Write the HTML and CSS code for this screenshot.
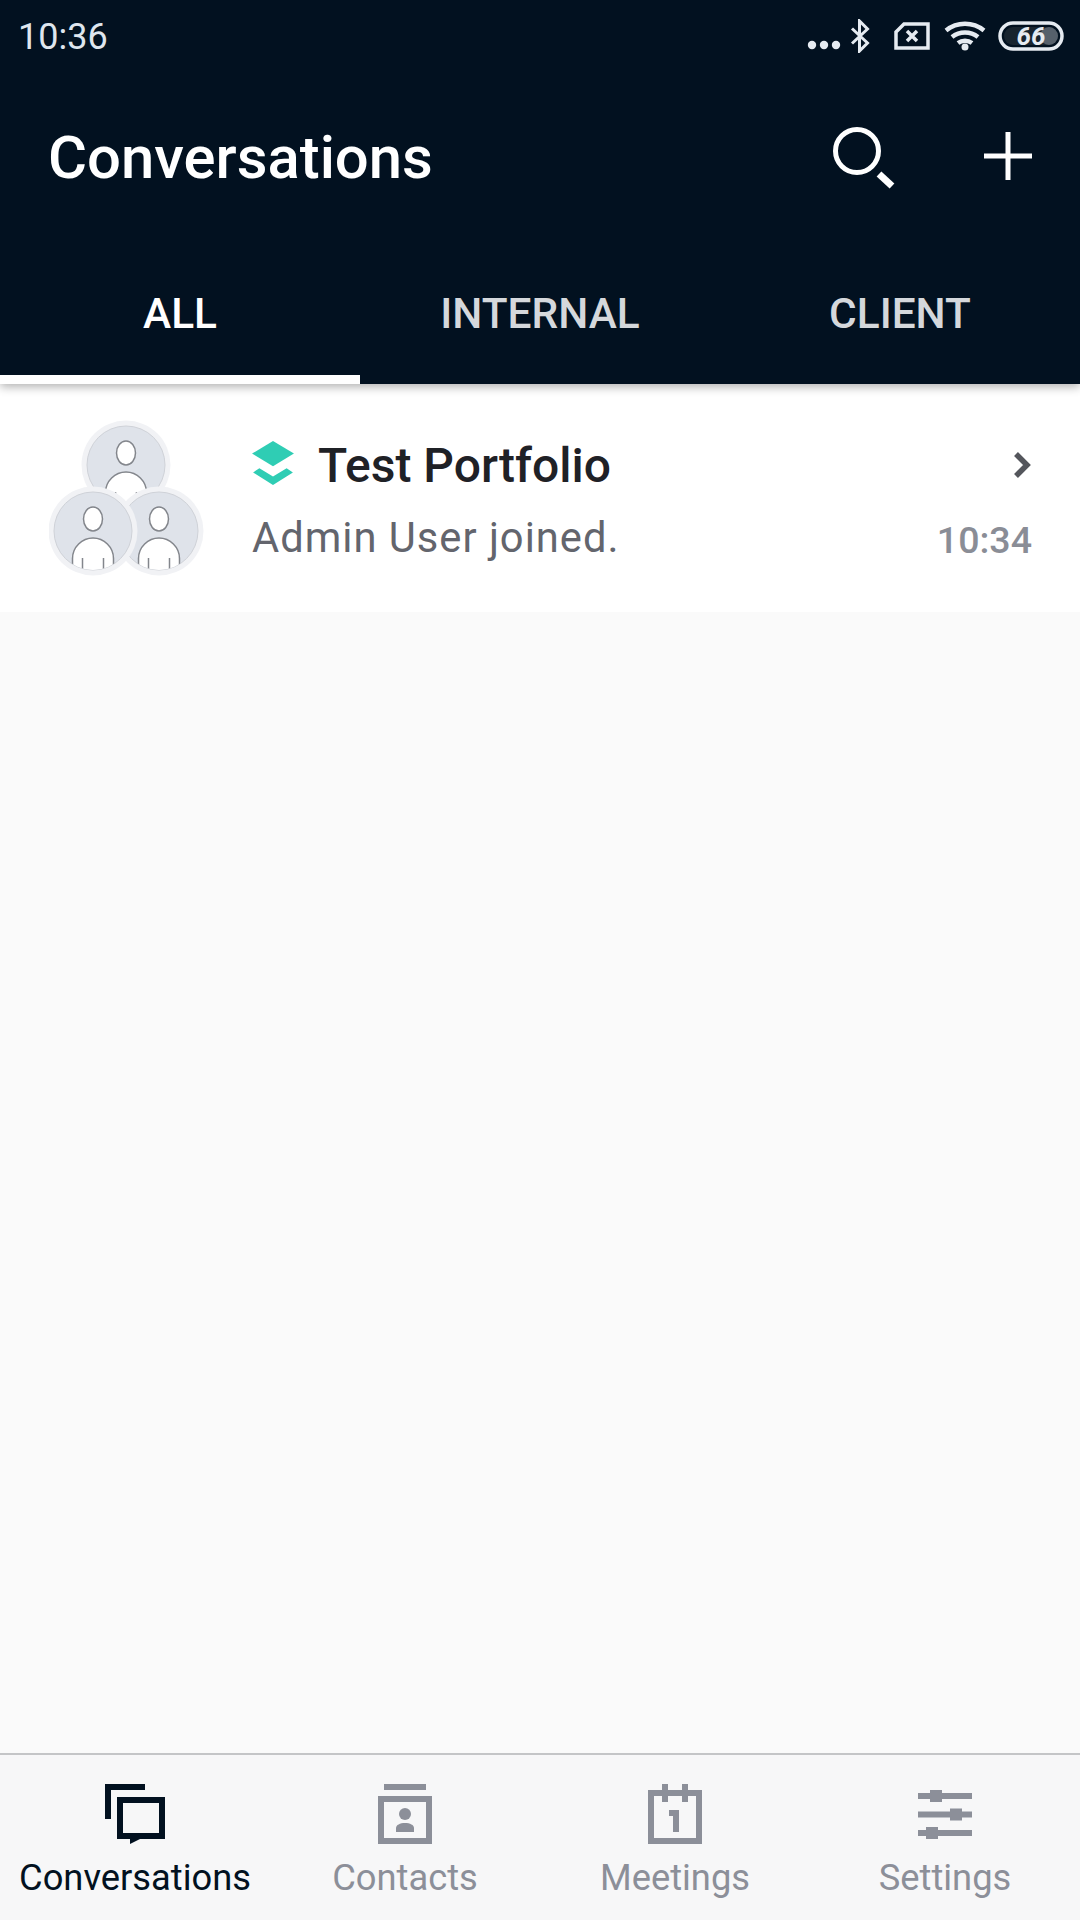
FILE: index.html
```html
<!DOCTYPE html>
<html lang="en">
<head>
    <meta charset="UTF-8">
    <meta name="viewport" content="width=device-width, initial-scale=1.0">
    <title>Conversations</title>
    <link rel="stylesheet" href="styles.css">
</head>
<body>
    <header class="appbar">
        <div class="statusbar">
            <span class="clock">10:36</span>
            <div class="status-icons">
                <svg class="dots" width="34" height="10" viewBox="0 0 34 10"><circle cx="5" cy="5" r="4.2"/><circle cx="17" cy="5" r="4.2"/><circle cx="29" cy="5" r="4.2"/></svg>
                <svg class="bt" width="20" height="34" viewBox="0 0 20 34"><path d="M2 9.500 17.500 24 9.500 32V2l8 8L2 24.500"/></svg>
                <svg class="sim" width="36" height="28" viewBox="0 0 36 28"><path d="M10 2h24v24H2V10z"/><path d="M13 9l10 10M23 9 13 19"/></svg>
                <svg class="wifi" width="42" height="30" viewBox="0 0 42 30"><path d="M2 9.500c11-9 27-9 38 0M8 16c7.500-6 18.500-6 26 0M14 22c4-3 10-3 14 0"/><circle cx="21" cy="26" r="3.500"/></svg>
                <svg class="battery" width="66" height="30" viewBox="0 0 66 30"><rect class="battery-back" x="6" y="6" width="54" height="18" rx="9"/><rect class="battery-level" x="42" y="6" width="18" height="18" rx="9"/><rect class="battery-case" x="2" y="2" width="62" height="26" rx="13"/><text x="33" y="24">66</text></svg>
            </div>
        </div>
        <div class="toolbar">
            <h1 class="title">Conversations</h1>
            <div class="actions">
                <svg width="62" height="62" viewBox="0 0 62 62"><circle cx="24" cy="24" r="21.500"/><path class="handle" d="M46 47l13 12"/></svg>
                <svg class="plus" width="48" height="48" viewBox="0 0 48 48"><path d="M0 24h48M24 0v48"/></svg>
            </div>
        </div>
        <nav class="tabs">
            <div class="tab active">ALL</div>
            <div class="tab">INTERNAL</div>
            <div class="tab">CLIENT</div>
        </nav>
    </header>

    <main class="list">
        <div class="row">
            <svg class="avatars" width="156" height="156" viewBox="0 0 156 156">
                <defs>
                    <clipPath id="face"><circle cx="0" cy="0" r="39"/></clipPath>
                    <g id="person">
                        <circle class="ring" r="44.500"/>
                        <circle class="disc" r="39"/>
                        <g clip-path="url(#face)">
                            <ellipse class="body" cx="0" cy="-12" rx="9.500" ry="12"/>
                            <path class="body" d="M-20.500 50V27.500C-20.500 16-11 7 0 7s20.500 9 20.500 20.500V50z"/>
                            <path class="seam" d="M-10.500 27v14M10.500 27v14"/>
                        </g>
                    </g>
                </defs>
                <use href="#person" x="77" y="45"/>
                <use href="#person" x="110" y="111"/>
                <use href="#person" x="44" y="111"/>
            </svg>
            <div class="row-body">
                <div class="row-top">
                    <svg class="layers" width="42" height="44" viewBox="0 0 40 42"><path d="M20 0l20 12-20 12L0 12z"/><path d="M7 26l13 8 13-8 6 4-19 12L1 30z"/></svg>
                    <span class="row-title">Test Portfolio</span>
                    <svg class="chevron" width="20" height="28" viewBox="0 0 20 28"><path d="M4 3l11 11L4 25"/></svg>
                </div>
                <div class="row-bottom">
                    <span class="row-text">Admin User joined.</span>
                    <span class="row-time">10:34</span>
                </div>
            </div>
        </div>
    </main>

    <footer class="bottombar">
        <div class="bottom-item current">
            <svg width="60" height="60" viewBox="0 0 60 60"><path d="M40 3H3v32M15 16h42v36H15z"/><path class="solid" d="M25 52h16L25 60z"/></svg>
            <span>Conversations</span>
        </div>
        <div class="bottom-item">
            <svg width="54" height="60" viewBox="0 0 54 60"><path d="M6 3h42"/><path d="M3 15h48v42H3z"/><circle class="solid" cx="27" cy="30" r="6"/><path class="solid" d="M18 48v-4c0-3 4-5 9-5s9 2 9 5v4z"/></svg>
            <span>Contacts</span>
        </div>
        <div class="bottom-item">
            <svg width="54" height="60" viewBox="0 0 54 60"><path d="M3 9h48v48H3z"/><path d="M17 0v18M37 0v18M21 29h7v19"/></svg>
            <span>Meetings</span>
        </div>
        <div class="bottom-item">
            <svg width="54" height="60" viewBox="0 0 54 60"><path d="M0 12h54M0 30.500h54M0 49h54"/><path class="solid" d="M12 6h12v12H12zM32 24.500h12v12H32zM8 43h12v12H8z"/></svg>
            <span>Settings</span>
        </div>
    </footer>
</body>
</html>
```

FILE: styles.css
```css
* {
    box-sizing: border-box;
}
body {
    margin: 0;
    height: 1920px;
    display: flex;
    flex-direction: column;
    background-color: #fafafa;
    font-family: Roboto, sans-serif;
}

/* top area */
.appbar {
    background-color: #021120;
    box-shadow: 0 3px 9px rgba(0, 0, 0, 0.3);
    position: relative;
}
.statusbar {
    height: 72px;
    padding: 0 16px 0 18px;
    display: flex;
    justify-content: space-between;
    align-items: center;
}
.clock {
    margin-top: 2px;
    color: #dfe6ee;
    font-size: 36px;
}
.status-icons {
    display: flex;
    align-items: center;
    gap: 12px;
}
.status-icons svg {
    fill: none;
    stroke: #e6ebf1;
    stroke-width: 3.5;
}
.status-icons .dots {
    fill: #e6ebf1;
    stroke: none;
    margin-top: 18px;
    margin-right: -3px;
}
.status-icons .bt {
    stroke-width: 3;
}
.status-icons .sim {
    margin-left: 12px;
}
.status-icons .wifi {
    margin-left: 2px;
    stroke-width: 4.5;
}
.wifi circle {
    fill: #e6ebf1;
    stroke: none;
}
.battery-back {
    fill: #18242f;
    stroke: none;
}
.battery-level {
    fill: #56606b;
    stroke: none;
}
.status-icons .battery text {
    fill: #e6ebf1;
    stroke: none;
    font-size: 26px;
    font-weight: 700;
    font-style: italic;
    text-anchor: middle;
}
.toolbar {
    height: 172px;
    padding: 0 48px;
    display: flex;
    justify-content: space-between;
    align-items: center;
}
.title {
    margin: 0;
    color: #ffffff;
    font-size: 59.8px;
    font-weight: 500;
}
.actions {
    display: flex;
    align-items: center;
    gap: 89px;
}
.actions svg {
    fill: none;
    stroke: #ffffff;
    stroke-width: 5;
}
.actions .handle {
    stroke-width: 7;
}
.actions .plus {
    margin-bottom: 4px;
}
.tabs {
    height: 140px;
    display: flex;
}
.tab {
    flex: 1;
    padding-top: 45px;
    border-bottom: 9px solid transparent;
    color: #d5d8dc;
    font-size: 42.4px;
    font-weight: 500;
    text-align: center;
}
.tab.active {
    color: #ffffff;
    border-bottom-color: #ffffff;
}

/* list */
.list {
    flex: 1;
}
.row {
    height: 228px;
    padding: 36px 48px 0 49px;
    display: flex;
    gap: 47px;
    background-color: #ffffff;
}
.ring {
    fill: #f1f2f5;
}
.disc {
    fill: #dfe3ea;
    stroke: #cfd2d8;
    stroke-width: 1;
}
.body {
    fill: #ffffff;
    stroke: #83868c;
    stroke-width: 1.500;
}
.seam {
    fill: none;
    stroke: #83868c;
    stroke-width: 1.500;
}
.row-body {
    flex: 1;
    padding-top: 13px;
}
.row-top {
    display: flex;
    align-items: center;
    height: 64px;
}
.layers {
    fill: #2fcdb4;
    margin-right: 24px;
    margin-bottom: 5px;
}
.row-title {
    flex: 1;
    color: #1f2126;
    font-size: 48px;
    font-weight: 500;
}
.chevron {
    fill: none;
    stroke: #54565c;
    stroke-width: 5.5;
}
.row-bottom {
    display: flex;
    justify-content: space-between;
    align-items: center;
    height: 81px;
}
.row-text {
    color: #63656d;
    font-size: 41.7px;
    letter-spacing: 1px;
}
.row-time {
    margin-top: 4px;
    color: #8a8d96;
    font-size: 37.5px;
    font-weight: 500;
}

/* bottom navigation */
.bottombar {
    height: 167px;
    display: flex;
    border-top: 2px solid #c4c5c7;
    background-color: #f7f7f8;
}
.bottom-item {
    flex: 1;
    padding-top: 29px;
    display: flex;
    flex-direction: column;
    align-items: center;
    color: #8c8f99;
    font-size: 36.3px;
}
.bottom-item svg {
    fill: none;
    stroke: #8c8f99;
    stroke-width: 6;
    margin-bottom: 12px;
}
.bottom-item .solid {
    fill: #8c8f99;
    stroke: none;
}
.bottom-item.current {
    color: #021120;
}
.bottom-item.current svg {
    stroke: #021120;
}
.bottom-item.current .solid {
    fill: #021120;
}
```
